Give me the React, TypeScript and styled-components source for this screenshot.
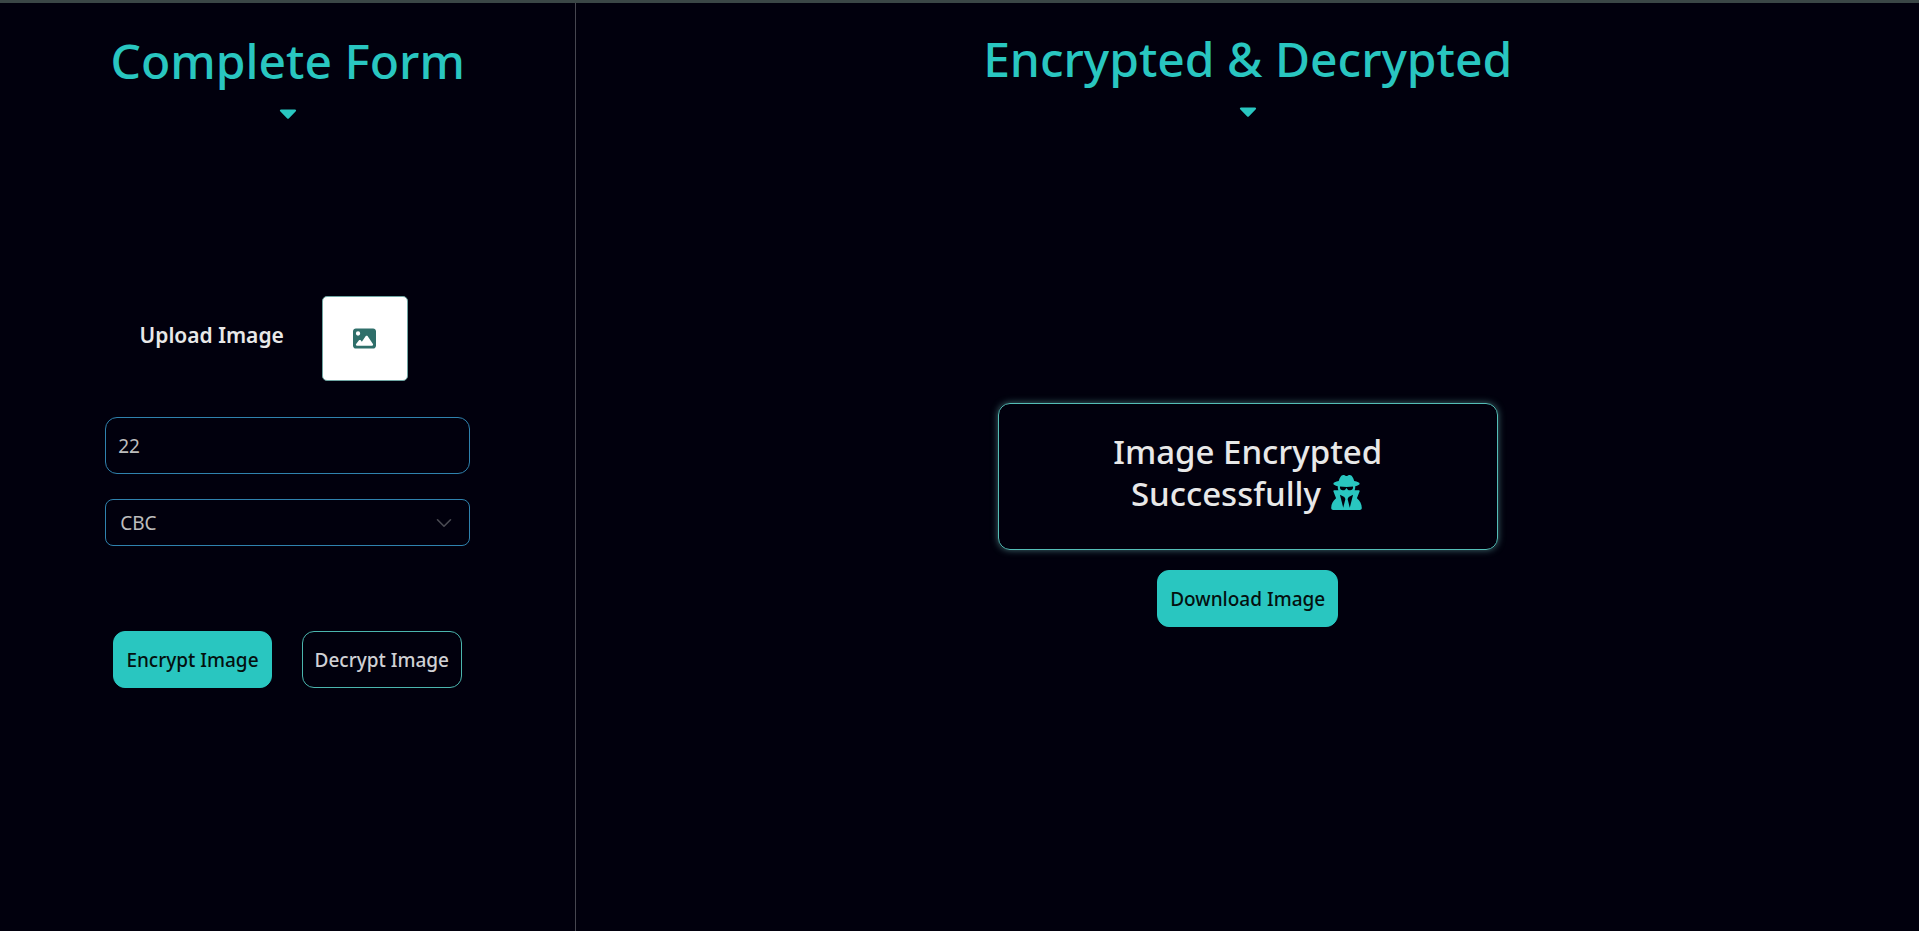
import React from "react";
import styled, { createGlobalStyle, css } from "styled-components";
import { FaCaretDown } from "react-icons/fa";
import { FaImage, FaUserSecret } from "react-icons/fa6";
import { ChevronDown } from "lucide-react";

const teal = "#29c6c0";

const GlobalStyle = createGlobalStyle`
  *, *::before, *::after { box-sizing: border-box; }
  body {
    margin: 0;
    background: #01000d;
    color: #e8e8e8;
    font-family: "Noto Sans", "Open Sans", sans-serif;
  }
`;

const Page = styled.div`
  display: flex;
  min-height: 100vh;
  border-top: 3px solid #3a4646;
`;

const Panel = styled.section<{ $side?: boolean }>`
  display: flex;
  flex-direction: column;
  align-items: center;
  flex: ${(p) => (p.$side ? "3 1 0" : "7 1 0")};
  padding-top: ${(p) => (p.$side ? 24 : 22)}px;
  border-right: ${(p) => (p.$side ? "1px solid #46464f" : "none")};
`;

const PanelTitle = styled.h1`
  display: flex;
  flex-direction: column;
  align-items: center;
  margin: 0;
  color: ${teal};
  font-size: 48px;
  line-height: 68px;
  font-weight: 500;
  text-align: center;

  svg { font-size: 28px; margin-top: 4px; }
`;

const FormBody = styled.form`
  display: flex;
  flex-direction: column;
  align-items: center;
  width: 100%;
  max-width: 365px;
  margin-top: 169px;
`;

const UploadRow = styled.div`
  display: flex;
  align-items: center;
  gap: 38px;
  margin-right: 28px;
  margin-bottom: 36px;
`;

const UploadLabel = styled.label`
  padding-bottom: 8px;
  font-size: 21px;
  line-height: 28px;
  font-weight: 600;
`;

const UploadButton = styled.button`
  display: grid;
  place-items: center;
  width: 86px;
  height: 85px;
  padding: 0;
  border: 1px solid #6fa5a2;
  border-radius: 5px;
  background: #fff;
  color: #2f6f6a;
  font-size: 23px;
  cursor: pointer;
`;

const field = css`
  width: 100%;
  border: 1px solid #2f82ad;
  background: transparent;
  color: #bdbdbd;
  font-family: inherit;
  font-size: 19px;
  outline: none;
`;

const KeyInput = styled.input`
  ${field}
  height: 57px;
  padding: 0 12px;
  border-radius: 12px;
  margin-bottom: 25px;
`;

const SelectWrap = styled.div`
  display: grid;
  width: 100%;
  align-items: center;

  > * { grid-area: 1 / 1; }
  svg {
    justify-self: end;
    margin-right: 13px;
    color: #4a4a52;
    pointer-events: none;
  }
`;

const ModeSelect = styled.select`
  ${field}
  appearance: none;
  height: 47px;
  padding: 0 14px;
  border-radius: 8px;

  option { color: #111; }
`;

const Actions = styled.div`
  display: flex;
  gap: 30px;
  margin-top: 85px;
`;

const Button = styled.button<{ $outline?: boolean }>`
  height: 57px;
  padding: 0 12px;
  border: 1px solid ${(p) => (p.$outline ? "#4bb5ae" : teal)};
  border-radius: 12px;
  background: ${(p) => (p.$outline ? "transparent" : teal)};
  color: ${(p) => (p.$outline ? "#d0d0d4" : "#04100f")};
  font-family: inherit;
  font-size: 19px;
  font-weight: 500;
  white-space: nowrap;
  cursor: pointer;
`;

const Result = styled.div`
  display: flex;
  flex-direction: column;
  align-items: center;
  gap: 20px;
  margin-top: 278px;
`;

const Notice = styled.div`
  display: flex;
  justify-content: center;
  width: 500px;
  max-width: 100%;
  padding: 27px 96px 34px;
  border: 1px solid #54bdb6;
  border-radius: 12px;
  box-shadow: 0 0 7px rgba(110, 180, 178, 0.6);
`;

const NoticeText = styled.h2`
  margin: 0;
  font-size: 33px;
  line-height: 42px;
  font-weight: 500;
  text-align: center;

  svg { color: ${teal}; font-size: 35px; vertical-align: -4px; }
`;

export default function App() {
  return (
    <>
      <GlobalStyle />
      <Page>
        <Panel $side>
          <PanelTitle>
            Complete Form
            <FaCaretDown aria-hidden />
          </PanelTitle>
          <FormBody onSubmit={(e) => e.preventDefault()}>
            <UploadRow>
              <UploadLabel htmlFor="upload">Upload Image</UploadLabel>
              <UploadButton id="upload" type="button">
                <FaImage aria-hidden />
              </UploadButton>
            </UploadRow>
            <KeyInput aria-label="Key" defaultValue="22" />
            <SelectWrap>
              <ModeSelect aria-label="Mode" defaultValue="CBC">
                <option>CBC</option>
                <option>ECB</option>
              </ModeSelect>
              <ChevronDown size={26} strokeWidth={1.5} aria-hidden />
            </SelectWrap>
            <Actions>
              <Button type="submit">Encrypt Image</Button>
              <Button type="button" $outline>Decrypt Image</Button>
            </Actions>
          </FormBody>
        </Panel>
        <Panel as="main">
          <PanelTitle>
            Encrypted &amp; Decrypted
            <FaCaretDown aria-hidden />
          </PanelTitle>
          <Result>
            <Notice>
              <NoticeText>
                Image Encrypted Successfully <FaUserSecret aria-hidden />
              </NoticeText>
            </Notice>
            <Button type="button">Download Image</Button>
          </Result>
        </Panel>
      </Page>
    </>
  );
}
